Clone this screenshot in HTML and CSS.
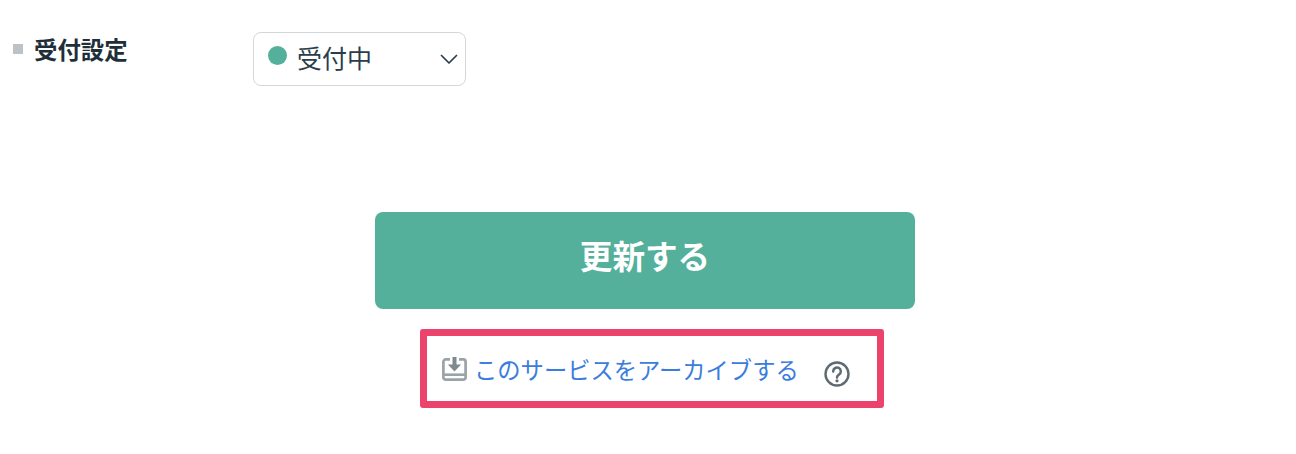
FILE: index.html
```html
<!DOCTYPE html>
<html lang="ja">

<head>
    <meta charset="UTF-8">
    <meta name="viewport" content="width=device-width, initial-scale=1.0">
    <title>受付設定</title>

    <link rel="stylesheet" href="styles.css">
</head>

<body>

    <section class="setting-row">
        <h2 class="setting-label">受付設定</h2>
        <div class="status-select">
            <span class="status-dot"></span>
            <span class="status-text">受付中</span>
            <svg class="status-arrow" width="18" height="11" viewBox="0 0 18 11" fill="none" stroke="#2b3d4a"
                stroke-width="1.7" stroke-linecap="round" stroke-linejoin="round">
                <path d="M1.5 1.5 L9 9 L16.5 1.5" />
            </svg>
        </div>
    </section>

    <section class="actions">
        <button class="submit-button">更新する</button>
        <div class="archive-box">
            <svg class="archive-icon" width="25" height="24" viewBox="0 0 25 24">
                <path fill="none" stroke="#9aa3a7" stroke-width="2.7" stroke-linejoin="round"
                    d="M8 2.4H3.8a2.4 2.4 0 0 0-2.4 2.4v15.6a2.2 2.2 0 0 0 2.4 2.2h17.4a2.2 2.2 0 0 0 2.4-2.2V4.8a2.4 2.4 0 0 0-2.4-2.4H17" />
                <rect x="1" y="16.4" width="23" height="2.6" fill="#9aa3a7" />
                <path fill="#7f8a8f" d="M10.5 0h4v7.4h4.6L12.5 14.6 5.9 7.4h4.6z" />
            </svg>
            <a class="archive-link" href="#">このサービスをアーカイブする</a>
            <svg class="help-icon" width="26" height="26" viewBox="0 0 26 26">
                <circle cx="13" cy="13" r="11.5" fill="none" stroke="#5f6b72" stroke-width="2.4" />
                <path d="M9.2 10.4a3.8 3.8 0 1 1 5.9 3.1c-1.4.9-2.1 1.5-2.1 3" fill="none" stroke="#5f6b72"
                    stroke-width="2.5" stroke-linecap="round" />
                <circle cx="13" cy="19.8" r="1.6" fill="#5f6b72" />
            </svg>
        </div>
    </section>

</body>

</html>
```

FILE: styles.css
```css
/* ページ全体 */
body {
    margin: 0;
    background-color: #fff;
    font-family: "Noto Sans CJK JP", "Noto Sans", sans-serif;
}

/* 受付設定 */
.setting-row {
    display: flex;
    align-items: flex-start;
    padding: 32px 0 0 13px;
    height: 180px;
    box-sizing: border-box;
}

.setting-label {
    display: flex;
    align-items: center;
    width: 240px;
    height: 34px;
    margin: 0;
    font-size: 23.4px;
    font-weight: 700;
    color: #1f2f3a;
}

.setting-label::before {
    content: "";
    width: 10px;
    height: 10px;
    margin-right: 11px;
    background-color: #bcc2c6;
}

.status-select {
    display: flex;
    align-items: center;
    width: 213px;
    height: 54px;
    padding: 0 14px;
    box-sizing: border-box;
    border: 1px solid #d4d7d9;
    border-radius: 8px;
    background-color: #fff;
}

.status-dot {
    width: 19px;
    height: 19px;
    margin-right: 10px;
    margin-bottom: 8px;
    border-radius: 50%;
    background-color: #54b09a;
}

.status-text {
    margin-bottom: 4px;
    font-size: 25px;
    color: #2b3d4a;
}

.status-arrow {
    margin-left: auto;
    margin-right: -7px;
}

/* ボタンとリンク */
.actions {
    display: flex;
    flex-direction: column;
    align-items: center;
    padding-right: 6px;
}

.submit-button {
    width: 540px;
    height: 97px;
    margin-top: 32px;
    padding-bottom: 14px;
    border: none;
    border-radius: 8px;
    background-color: #54b09a;
    color: #fff;
    font-family: inherit;
    font-size: 32.6px;
    font-weight: 700;
}

.archive-box {
    display: flex;
    align-items: center;
    width: 464px;
    height: 79px;
    margin-top: 20px;
    margin-left: 14px;
    padding-left: 15px;
    box-sizing: border-box;
    border: 7px solid #ec436d;
    border-radius: 3px;
}

.archive-link {
    margin-left: 7px;
    font-size: 23.3px;
    color: #3b7ddd;
    text-decoration: none;
}

.help-icon {
    margin-left: 25px;
    margin-top: 10px;
}
```
